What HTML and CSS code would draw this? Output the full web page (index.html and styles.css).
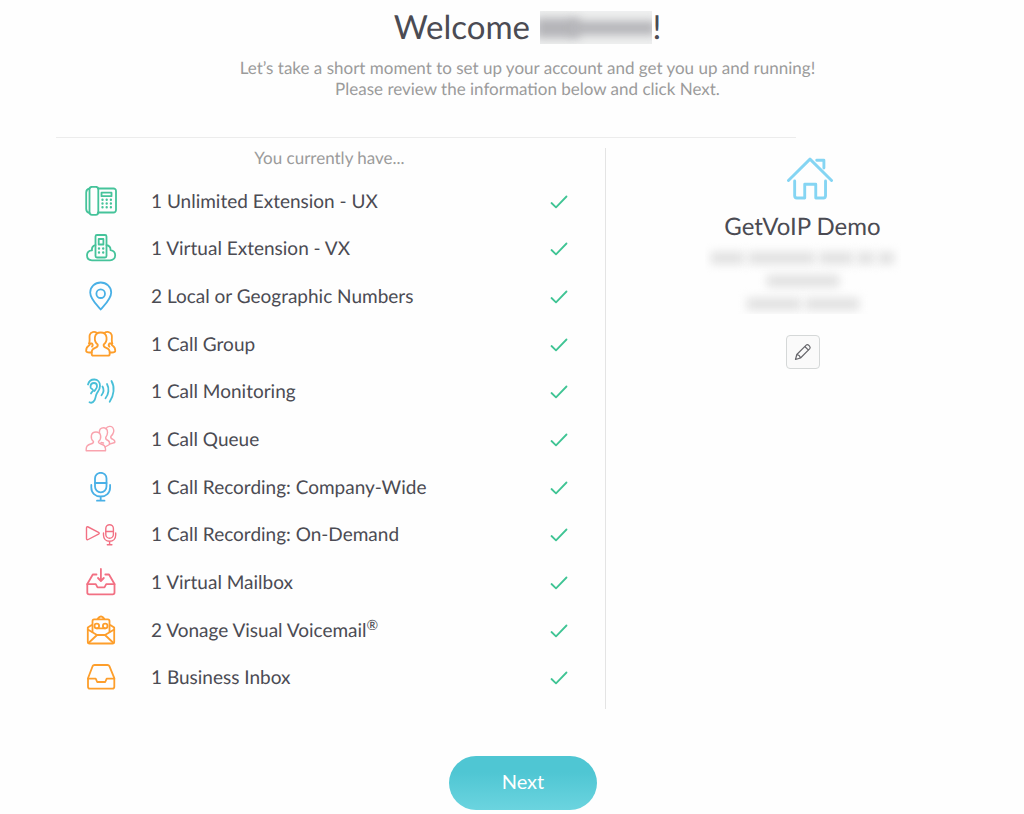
FILE: index.html
```html
<!DOCTYPE html>
<html lang="en">
<head>
  <meta charset="utf-8">
  <title>Welcome</title>
  <link rel="stylesheet" href="styles.css">
</head>
<body>

<main class="page">
  <header class="intro">
    <h1>Welcome <span class="hidden-name"><span class="smudge tall"></span><span class="smudge wide"></span></span>!</h1>
    <p>Let’s take a short moment to set up your account and get you up and running!<br>Please review the information below and click Next.</p>
  </header>

  <hr class="divider">

  <div class="columns">
    <section class="features">
      <h2>You currently have...</h2>
      <ul class="feature-list">
        <li>
          <svg class="icon green" viewBox="0 0 32 32"><path d="M13 2.500h15.500a2.500 2.500 0 0 1 2.500 2.500v19a2.500 2.500 0 0 1-2.500 2.500H13"/><rect x="4.500" y=".8" width="8.800" height="28" rx="2.500"/><path d="M4.500 2.500C2.200 3 1.200 4 1.200 6.500v16.500c0 2.500 1 3.500 3.300 4"/><rect x="16.500" y="6.700" width="10" height="3.500"/><path class="dots" d="M17.500 13.700h0M21.700 13.700h0M25.900 13.700h0M17.500 17.500h0M21.700 17.500h0M25.900 17.500h0M17.500 21.300h0M21.700 21.300h0M25.900 21.300h0"/></svg>
          <span>1 Unlimited Extension - UX</span>
          <svg class="check" viewBox="0 0 18 14"><path d="M1.500 8l4.500 4.300L16.500 1.500"/></svg>
        </li>
        <li>
          <svg class="icon green" viewBox="0 0 32 32"><rect x="10.500" y="2" width="11" height="22.500" rx="1.500"/><rect x="13.700" y="6" width="4.700" height="5.500"/><path class="dots" d="M14 15.500h0M18.200 15.500h0M14 19.500h0M18.200 19.500h0"/><path d="M10.500 12.200C7.500 12.500 6.700 15 7 17.300 3.500 17.500 2 20 2 22.300c0 3 2 5 5 5h18c3 0 5.200-2 5.200-5 0-2.800-1.800-4.800-4.700-5.200.2-2.500-1-4.400-4-4.900"/></svg>
          <span>1 Virtual Extension - VX</span>
          <svg class="check" viewBox="0 0 18 14"><path d="M1.500 8l4.500 4.300L16.500 1.500"/></svg>
        </li>
        <li>
          <svg class="icon blue" viewBox="0 0 32 32"><path d="M15.700 28.500C11.500 23.500 5.200 18 5.200 11.500a10.500 10 0 0 1 21 0c0 6.500-6.300 12-10.500 17z"/><circle cx="15.700" cy="12.700" r="4.300"/></svg>
          <span>2 Local or Geographic Numbers</span>
          <svg class="check" viewBox="0 0 18 14"><path d="M1.500 8l4.500 4.300L16.500 1.500"/></svg>
        </li>
        <li>
          <svg class="icon orange" viewBox="0 0 32 32"><path d="M12.700 15.500c-4-3-4.500-12 3-12s7 9 3 12c-.5 2 .5 2.700 2.500 3.300 2.300.8 3.500 1.700 3.500 4.200v2c0 1.200-.5 1.700-1.700 1.700H8.400c-1.200 0-1.700-.5-1.700-1.700v-2c0-2.500 1.200-3.400 3.500-4.200 2-.6 3-1.300 2.500-3.300z"/><path d="M12 4C9.500 2 5.500 2.700 4.700 6c-.6 2.500.5 5.500-.6 8.500 1.200.2.700 1.600-.4 2.200C1.500 18 1 19.500 1.200 22.300c1 1.200 3 1.200 5.500 1.200M19.400 4c2.500-2 6.500-1.300 7.300 2 .6 2.500-.5 5.500.6 8.500-1.200.2-.7 1.600.4 2.200 2.200 1.300 2.700 2.800 2.500 5.600-1 1.200-3 1.200-5.500 1.200"/><path d="M4.100 14.500h3c1 1.300.7 2.400-.1 3.200M27.300 14.500h-3c-1 1.300-.7 2.400.1 3.200"/></svg>
          <span>1 Call Group</span>
          <svg class="check" viewBox="0 0 18 14"><path d="M1.500 8l4.500 4.300L16.500 1.500"/></svg>
        </li>
        <li>
          <svg class="icon aqua" viewBox="0 0 32 32"><path d="M3 8.500c.8-3.300 3.300-5 6.300-5 3.500 0 5.700 2.700 5.700 6.200 0 3.700-1.700 5.300-3.200 7.800-1.300 2.200-1 4.500-2.300 6.700-1.200 2-3.300 3-5 2"/><path d="M5.500 11c0-2.500 1.500-4 3.500-4s3 1.500 3 3.200c0 2.300-1.700 3.300-2.700 4.800M5.500 11c-.3 2 2.800 1.500 2.500 3.500-.3 1.200-1.500 1.500-2 3"/><path d="M17.500 10.500c1.500 2.500 1.200 6-1 8.700M22 8c2.500 4.500 1.700 10.300-1.500 14.300M26.500 5c3.500 6 2.500 14.500-1.800 20.700"/></svg>
          <span>1 Call Monitoring</span>
          <svg class="check" viewBox="0 0 18 14"><path d="M1.500 8l4.500 4.300L16.500 1.500"/></svg>
        </li>
        <li>
          <svg class="icon pink" viewBox="0 0 32 32"><path d="M8.500 17.500c-3.500-3-3-9.500 2.500-9.500s6 6.500 2.500 9.500c-.3 1.500.5 2 2.500 2.500 3 .8 4.500 2.500 4.500 5v1.800H1.200V25c0-2.500 1.500-4.200 4.500-5 2-.5 3-1 2.800-2.500z"/><path d="M14.500 8.500c-.5-2.800 1.300-4.800 4-4.800 1 0 1.800.3 2.500 1M21 4.700c1.500-2.700 5.500-3.200 7-.7 1.500 2.500.3 6-2.200 8.500-.3 1.700.7 2.300 2.200 2.800 1.500.6 2 1.500 1.800 3.200l-5.300 1.700"/><path d="M21 4.700c2.200 1.500 2 5.500-.3 8.800-.3 1.700.7 2.300 2.300 3 1.500.7 1.800 2 1.500 4l-4.500 2.500M16 18.500l2.500.5"/></svg>
          <span>1 Call Queue</span>
          <svg class="check" viewBox="0 0 18 14"><path d="M1.500 8l4.500 4.300L16.500 1.500"/></svg>
        </li>
        <li>
          <svg class="icon blue" viewBox="0 0 32 32"><rect x="10" y=".8" width="11.500" height="19.500" rx="5.700"/><path d="M10 11h11.500M6.300 13v2.500c0 5.500 4 9 9.400 9s9.400-3.500 9.400-9V13M15.700 24.500v4M12 28.700h7.500"/></svg>
          <span>1 Call Recording: Company-Wide</span>
          <svg class="check" viewBox="0 0 18 14"><path d="M1.500 8l4.500 4.300L16.500 1.500"/></svg>
        </li>
        <li>
          <svg class="icon red thin" viewBox="0 0 32 32"><path d="M1.500 9c0-1 .7-1.500 1.700-1l10.300 5.300c1 .6 1 1.300 0 1.900L3.200 20.500c-1 .5-1.700 0-1.700-1z"/><rect x="20.800" y="5.700" width="7.600" height="13.500" rx="3.800"/><path d="M20.800 12.500h7.600M18.500 14v2c0 3.800 2.500 6.300 6.100 6.300s6.100-2.500 6.100-6.300v-2M24.600 22.300v3.200M22.300 25.700h4.600"/></svg>
          <span>1 Call Recording: On-Demand</span>
          <svg class="check" viewBox="0 0 18 14"><path d="M1.500 8l4.500 4.300L16.500 1.500"/></svg>
        </li>
        <li>
          <svg class="icon red" viewBox="0 0 32 32"><path d="M11.500 7.500H7.800L2.300 17v8.500c0 1.200.6 1.800 1.800 1.800h23.600c1.200 0 1.800-.6 1.800-1.800V17L24 7.500h-3.700"/><path d="M2.300 17.200h8.500l1.700 3.200h7l1.700-3.200h8.300M15.900 2v11.500M13 11l2.900 3 2.900-3"/></svg>
          <span>1 Virtual Mailbox</span>
          <svg class="check" viewBox="0 0 18 14"><path d="M1.500 8l4.500 4.300L16.500 1.500"/></svg>
        </li>
        <li>
          <svg class="icon orange" viewBox="0 0 32 32"><path d="M7.500 17V6c0-1 .5-1.600 1.600-1.600h13.800c1 0 1.600.6 1.600 1.600v11M12 4.400L14.500 2q1.500-1 3 0L20 4.400M7.500 9.500L2.800 12.500v14.300c0 1.200.5 1.700 1.700 1.700h23c1.200 0 1.700-.5 1.700-1.700V12.500L24.500 9.500"/><path d="M2.800 14.500L12 20h8l9.200-5.500M3.500 28L12 20M28.500 28L20 20"/><circle cx="11.800" cy="11" r="2.300"/><circle cx="20.200" cy="11" r="2.300"/><path d="M11.800 13.300h8.400"/></svg>
          <span>2 Vonage Visual Voicemail<sup>®</sup></span>
          <svg class="check" viewBox="0 0 18 14"><path d="M1.500 8l4.500 4.300L16.500 1.500"/></svg>
        </li>
        <li>
          <svg class="icon orange" viewBox="0 0 32 32"><path d="M9.500 3h13c1 0 1.500.3 1.900 1.200l4.900 12v8.500c0 1.300-.6 1.900-1.900 1.900H4.900c-1.300 0-1.900-.6-1.900-1.900v-8.500l4.600-12C8 3.300 8.500 3 9.500 3z"/><path d="M3 16.700h7.700l1.500 3.300h8l1.500-3.300h7.600"/></svg>
          <span>1 Business Inbox</span>
          <svg class="check" viewBox="0 0 18 14"><path d="M1.500 8l4.500 4.300L16.500 1.500"/></svg>
        </li>
      </ul>
    </section>

    <aside class="account">
      <svg class="house" viewBox="0 0 48 44"><path d="M1.500 24L24 1.800 46.500 24M31 3h7.500v8M8 24.500v15.500q0 2.300 2.300 2.300h8.200V28h11.500v14.300h8q2.200 0 2.200-2.300V24.500"/></svg>
      <h2>GetVoIP Demo</h2>
      <div class="address">
        <div class="line"><span class="smudge"></span><span class="smudge wide"></span><span class="smudge"></span><span class="smudge short"></span><span class="smudge short"></span></div>
        <div class="line"><span class="smudge long"></span></div>
        <div class="line"><span class="smudge wide"></span><span class="smudge wide"></span></div>
      </div>
      <button class="edit" type="button" aria-label="Edit address">
        <svg viewBox="0 0 18 18"><path d="M1.500 16.500l1.300-5L12.200 2.100c1.600-1.500 5 1.800 3.600 3.500L6.500 15zM2.800 11.500c1.700.3 3.300 1.800 3.700 3.500M10.800 3.500l3.700 3.700"/></svg>
      </button>
    </aside>
  </div>

  <footer class="actions">
    <button class="next" type="button">Next</button>
  </footer>
</main>

</body>
</html>
```
FILE: styles.css
```css
* {
  box-sizing: border-box;
}

body {
  margin: 0;
  background-color: #fefefe;
  color: #4b4b53;
  font-family: Lato, "Liberation Sans", sans-serif;
  text-rendering: geometricPrecision;
}

.page {
  padding: 4px 25px 4px 56px;
}

.intro {
  text-align: center;
}

.intro h1 {
  margin: 0;
  font-size: 33px;
  font-weight: normal;
  line-height: 46px;
}

.intro p {
  margin: 7px 0 0;
  color: #9b9b9b;
  font-size: 17px;
  line-height: 21px;
}

/* Blurred first name */
.hidden-name {
  display: inline-flex;
  align-items: center;
  width: 112px;
  height: 33px;
  margin: 7px 0 0 2px;
  overflow: hidden;
  vertical-align: top;
  background-color: #eff0f0;
}

.smudge {
  flex: 2;
  height: 14px;
  background-color: #b4b4b8;
  filter: blur(5px);
}

.hidden-name .smudge {
  margin: 0 -4px;
}

.smudge.tall {
  height: 20px;
}

.smudge.wide {
  flex: 4;
}

.smudge.short {
  flex: 1;
}

.divider {
  width: 78.5%;
  margin: 38px 0 10px;
  border: 0;
  border-top: 1px solid #ececec;
}

.columns {
  display: grid;
  grid-template-columns: 550fr 393fr;
}

.features {
  border-right: 1px solid #e4e4e4;
  padding: 0 37px 7px 29px;
}

.features h2 {
  margin: 0 0 10px;
  padding-left: 6px;
  color: #9b9b9b;
  font-size: 17px;
  font-weight: normal;
  line-height: 20px;
  text-align: center;
}

.feature-list {
  display: grid;
  grid-auto-rows: 1fr;
  min-height: 524px;
  margin: 0;
  padding: 0;
  list-style: none;
}

.feature-list li {
  display: grid;
  grid-template-columns: 32px 1fr 18px;
  column-gap: 34px;
  align-items: center;
  font-size: 19px;
  line-height: 24px;
}

.feature-list sup {
  font-size: 14px;
  line-height: 0;
}

svg {
  display: block;
  fill: none;
  stroke-linecap: round;
  stroke-linejoin: round;
}

.icon {
  width: 32px;
  height: 32px;
  stroke: currentColor;
  stroke-width: 1.8;
}

.icon.thin,
.icon.pink {
  stroke-width: 1.4;
}

.icon .dots {
  stroke-width: 2.4;
}

.green {
  color: #45c39a;
}

.blue {
  color: #49b0e6;
}

.orange {
  color: #fd9e2b;
}

.aqua {
  color: #48bfd8;
}

.pink {
  color: #f9a3ae;
}

.red {
  color: #f27083;
}

.check {
  width: 18px;
  height: 14px;
  stroke: #3fc494;
  stroke-width: 1.8;
}

.account {
  display: flex;
  flex-direction: column;
  align-items: center;
  padding-top: 9px;
}

.house {
  width: 46px;
  height: 43px;
  margin-left: 14px;
  stroke: #85d5f3;
  stroke-width: 3;
}

.account h2 {
  margin: 12px 0 0;
  font-size: 24px;
  font-weight: normal;
  line-height: 30px;
}

/* Blurred postal address */
.address {
  display: flex;
  flex-direction: column;
  align-items: center;
  gap: 11px;
  width: 196px;
  height: 72px;
  padding: 10px 6px;
  overflow: hidden;
}

.address .line {
  display: flex;
  justify-content: center;
  gap: 4px;
  width: 100%;
}

.address .smudge {
  height: 12px;
  background-color: #e0e0e0;
}

.address .smudge.long {
  flex: 0 0 72px;
}

.address .line:last-child {
  width: 112px;
}

.edit {
  display: flex;
  align-items: center;
  justify-content: center;
  width: 34px;
  height: 34px;
  margin-top: 21px;
  padding: 0;
  border: 1px solid #d5d8d8;
  border-radius: 4px;
  background-color: #fafafa;
  cursor: pointer;
}

.edit svg {
  width: 18px;
  height: 18px;
  stroke: #66666b;
  stroke-width: 1.2;
}

.actions {
  display: flex;
  justify-content: center;
  padding: 47px 9px 0 0;
}

.next {
  width: 148px;
  height: 54px;
  padding: 0 0 5px;
  border: 0;
  border-radius: 27px;
  background: linear-gradient(#4fc6d3 30%, #6bd4df);
  color: #fff;
  font-family: inherit;
  font-size: 20px;
  cursor: pointer;
}
```
